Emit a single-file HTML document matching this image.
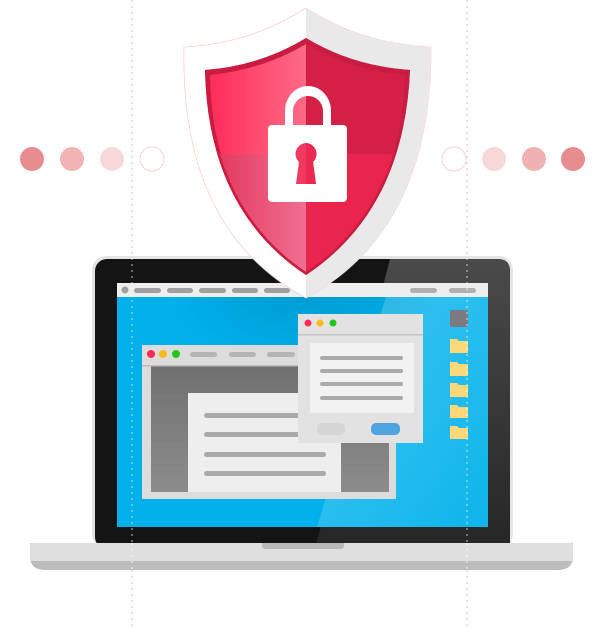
<!DOCTYPE html>
<html><head><meta charset="utf-8"><style>html,body{margin:0;padding:0;background:#fff}svg{display:block}</style></head>
<body>
<svg width="600" height="628" viewBox="0 0 600 628" xmlns="http://www.w3.org/2000/svg">
<defs>
<linearGradient id="lr" x1="0" x2="1"><stop offset="0" stop-color="#ff2d5a"/><stop offset="1" stop-color="#ff6a86"/></linearGradient>
<linearGradient id="ll" x1="0" x2="1"><stop offset="0" stop-color="#e22d55"/><stop offset="1" stop-color="#ee7090"/></linearGradient>
<linearGradient id="gd" x1="0" y1="0" x2="0" y2="1"><stop offset="0" stop-color="#707070"/><stop offset="1" stop-color="#8c8c8c"/></linearGradient>
<linearGradient id="gl" x1="0" y1="0" x2="1" y2="1"><stop offset="0" stop-color="#5fd0f4" stop-opacity="0.7"/><stop offset="1" stop-color="#5fd0f4" stop-opacity="0.15"/></linearGradient>
<linearGradient id="bz" x1="0" y1="0" x2="0" y2="1"><stop offset="0" stop-color="#4a4a4a"/><stop offset="1" stop-color="#262626"/></linearGradient>
<radialGradient id="sh" cx="0.5" cy="0.3" r="0.5"><stop offset="0" stop-color="#005a8a" stop-opacity="0.35"/><stop offset="1" stop-color="#005a8a" stop-opacity="0"/></radialGradient>
<clipPath id="shc"><path d="M306 38 Q260 66 205 70 Q208 210 306 275 Q404 210 410 70 Q352 66 306 38Z"/></clipPath>
<clipPath id="scr"><rect x="117" y="297" width="371" height="230"/></clipPath>
</defs>
<g>
<circle cx="32" cy="159" r="12" fill="#e88d8f"/>
<circle cx="72" cy="159" r="12" fill="#f1b3b4"/>
<circle cx="112" cy="159" r="12" fill="#f7d7d8"/>
<circle cx="152" cy="159" r="12" fill="none" stroke="#f7d2d3" stroke-width="1"/>
<circle cx="454" cy="159" r="12" fill="none" stroke="#f7d2d3" stroke-width="1"/>
<circle cx="494" cy="159" r="12" fill="#f7d7d8"/>
<circle cx="534" cy="159" r="12" fill="#efb1b2"/>
<circle cx="573" cy="159" r="12" fill="#e88d8f"/>
</g>
<g stroke="#f5c3c3" stroke-width="1.2" stroke-dasharray="2 4">
<line x1="132" y1="0" x2="132" y2="628"/><line x1="467" y1="0" x2="467" y2="628"/>
</g>
<rect x="92" y="256" width="421" height="292" rx="14" fill="#e4e4e4"/>
<rect x="95" y="259" width="415" height="290" rx="12" fill="#141414"/>
<path d="M390 259 L498 259 Q510 259 510 271 L510 549 L315 549Z" fill="url(#bz)"/>
<rect x="117" y="283" width="371" height="244" fill="#00b0ea"/>
<path d="M390 283 L488 283 L488 527 L317 527Z" fill="url(#gl)"/>
<ellipse cx="306" cy="300" rx="150" ry="120" fill="url(#sh)" clip-path="url(#scr)"/>
<rect x="117" y="283" width="371" height="14" fill="#eeeeee"/>
<g fill="#a0a0a0">
<circle cx="125" cy="290" r="3.5"/>
<rect x="134" y="288" width="27" height="5" rx="2.5"/><rect x="167" y="288" width="26" height="5" rx="2.5"/>
<rect x="199" y="288" width="27" height="5" rx="2.5"/><rect x="232" y="288" width="26" height="5" rx="2.5"/>
<rect x="264" y="288" width="26" height="5" rx="2.5"/>
<rect x="410" y="288" width="27" height="5" rx="2.5" fill="#b0b0b0"/><rect x="449" y="288" width="27" height="5" rx="2.5" fill="#b0b0b0"/>
</g>
<rect x="142" y="345" width="254" height="154" fill="#dcdcdc"/>
<rect x="151" y="366" width="238" height="126" fill="url(#gd)"/>
<rect x="142" y="365" width="254" height="1.5" fill="#bbb"/>
<circle cx="151" cy="354" r="4" fill="#ff2d55"/><circle cx="163" cy="354" r="4" fill="#ffb81c"/><circle cx="176" cy="354" r="4" fill="#1ec61e"/>
<g fill="#b5b5b5"><rect x="190" y="352" width="27" height="5" rx="2.5"/><rect x="229" y="352" width="27" height="5" rx="2.5"/><rect x="267" y="352" width="28" height="5" rx="2.5"/></g>
<rect x="188" y="393" width="153" height="99" fill="#eeeeee"/>
<g fill="#aaaaaa"><rect x="204" y="413" width="122" height="5" rx="2.5"/><rect x="204" y="432" width="122" height="5" rx="2.5"/><rect x="204" y="452" width="122" height="5" rx="2.5"/><rect x="204" y="471" width="122" height="5" rx="2.5"/></g>
<rect x="298" y="314" width="125" height="129" fill="#e2e2e2"/>
<rect x="298" y="334" width="125" height="1.5" fill="#c4c4c4"/>
<circle cx="308" cy="323" r="3.5" fill="#ff2d55"/><circle cx="320" cy="323" r="3.5" fill="#ffb81c"/><circle cx="333" cy="323" r="3.5" fill="#1ec61e"/>
<rect x="310" y="343" width="104" height="70" fill="#f2f2f2"/>
<g fill="#aaaaaa"><rect x="320" y="356" width="83" height="4" rx="2"/><rect x="320" y="369" width="83" height="4" rx="2"/><rect x="320" y="382" width="83" height="4" rx="2"/><rect x="320" y="396" width="83" height="4" rx="2"/></g>
<rect x="317" y="423" width="28" height="12" rx="5" fill="#d6d6d6"/>
<rect x="371" y="423" width="29" height="12" rx="5" fill="#4ea3e0"/>
<rect x="450" y="310" width="18" height="17" rx="2" fill="#7a7a80"/>
<g fill="#ffd87a">
<path d="M450 339h7l2 2h9v12h-18z"/><path d="M450 362h7l2 2h9v12h-18z"/><path d="M450 383h7l2 2h9v12h-18z"/><path d="M450 405h7l2 2h9v11h-18z"/><path d="M450 426h7l2 2h9v11h-18z"/>
</g>
<g stroke="#ffffff" stroke-opacity="0.6" stroke-width="1.2" stroke-dasharray="2 4">
<line x1="132" y1="258" x2="132" y2="570"/><line x1="467" y1="258" x2="467" y2="570"/>
</g>
<path d="M30 543 H573 V556 Q573 570 558 570 H45 Q30 570 30 556Z" fill="#bdbdbd"/>
<path d="M32 543 H571 Q573 543 573 546 V561 H30 V546 Q30 543 32 543Z" fill="#dfdfdf"/>
<path d="M262 543 H344 V546 Q344 549 340 549 H266 Q262 549 262 546Z" fill="#b8b8b8"/>
<g stroke="#ffffff" stroke-opacity="0.7" stroke-width="1.2" stroke-dasharray="2 4">
<line x1="132" y1="543" x2="132" y2="570"/><line x1="467" y1="543" x2="467" y2="570"/>
</g>
<path d="M306 8 Q250 44 184 47 Q180 230 306 298 Q432 230 431 47 Q362 44 306 8Z" fill="#fff" stroke="#f6d0d0" stroke-width="0.8"/>
<path d="M306 8 Q362 44 431 47 Q432 230 306 298Z" fill="#e9e9e9"/>
<path d="M306 38 Q260 66 205 70 Q208 210 306 275 Q404 210 410 70 Q352 66 306 38Z" fill="#c81c40"/>
<g clip-path="url(#shc)">
<path d="M306 44 Q262 70 210 75 Q212 210 306 268Z" fill="url(#lr)"/>
<path d="M306 44 Q350 70 405 75 Q402 210 306 268Z" fill="#d41f47"/>
<rect x="200" y="154" width="106" height="130" fill="url(#ll)"/>
<rect x="306" y="154" width="110" height="130" fill="#ea254d"/>
<path d="M306 38 Q260 66 205 70 Q208 210 306 275 Q404 210 410 70 Q352 66 306 38Z" fill="none" stroke="#c81c40" stroke-width="5"/>
</g>
<path d="M283 125 V111 A23 25 0 0 1 329 111 V125 H321 V111 A15 15 0 0 0 291 111 V125Z" fill="#fff" transform="translate(2 0)"/>
<rect x="268" y="125" width="79" height="77" rx="4" fill="#fff"/>
<path d="M306 143 A11 11 0 0 1 313 162 L316 184 H296 L299 162 A11 11 0 0 1 306 143Z" fill="#f23a61"/>
<path d="M306 143 A11 11 0 0 1 313 162 L316 184 H306Z" fill="#ea2a52"/>
</svg>
</body></html>
